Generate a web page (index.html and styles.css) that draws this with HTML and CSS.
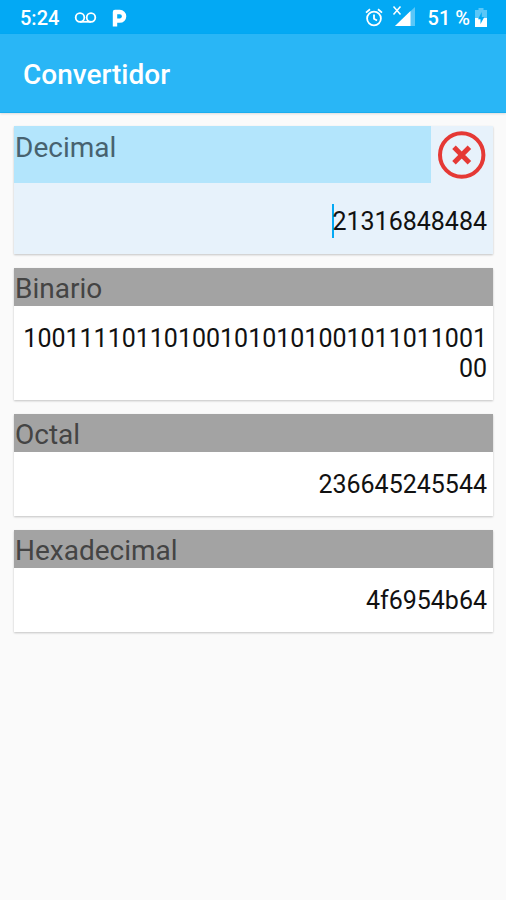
FILE: index.html
```html
<!DOCTYPE html>
<html lang="es">
  <head>
    <meta charset="UTF-8">
    <meta name="viewport" content="width=device-width, initial-scale=1">
    <title>Convertidor</title>
    <link rel="stylesheet" href="styles.css">
  </head>
  <body>
    <div class="status-bar">
      <span class="clock">5:24</span>
      <svg class="voicemail" width="23" height="12" viewBox="0 0 23 12">
        <circle cx="6" cy="5.500" r="4.300"/>
        <circle cx="17" cy="5.500" r="4.300"/>
        <path d="M6 9.800h11"/>
      </svg>
      <svg class="parking" width="15" height="18" viewBox="0 0 15 18">
        <path d="M3 17.500V3h4.800a4.300 4.300 0 0 1 0 8.600H4"/>
      </svg>
      <svg class="alarm" width="18" height="19" viewBox="0 0 18 19">
        <circle cx="9" cy="10.500" r="6.900"/>
        <path d="M9 6.500v4.200l3 1.800M1 4.600l4-3.300M17 4.600l-4-3.300"/>
      </svg>
      <svg class="signal" width="24" height="22" viewBox="0 0 24 22">
        <path class="faint" d="M3 21L23 2v19z"/>
        <path class="solid" d="M3 21L18.500 6V21z"/>
        <path class="cross" d="M1.500 1.500l7 8M8.500 1.500l-7 8"/>
      </svg>
      <span class="percent">51 %</span>
      <svg class="battery" width="12" height="19" viewBox="0 0 12 19">
        <path class="faint" d="M3.500 2V0h5v2H12v8H0V2z"/>
        <path class="solid" d="M0 10h12v9H0z"/>
        <path class="bolt" d="M6.800 4L3 11.300h2.500V16L9.300 9H6.800z"/>
      </svg>
    </div>
    <div class="toolbar">
      <h1>Convertidor</h1>
    </div>
    <div class="cards">
      <div class="card active">
        <div class="card-top">
          <div class="label">Decimal</div>
          <svg class="clear" width="62" height="57" viewBox="0 0 62 57">
            <circle cx="30.700" cy="29" r="21.700"/>
            <path d="M23 21.300l15.400 15.400M38.400 21.300L23 36.700"/>
          </svg>
        </div>
        <div class="value"><span class="caret"></span>21316848484</div>
      </div>
      <div class="card">
        <div class="label">Binario</div>
        <div class="value">10011110110100101010100101101100100</div>
      </div>
      <div class="card">
        <div class="label">Octal</div>
        <div class="value">236645245544</div>
      </div>
      <div class="card">
        <div class="label">Hexadecimal</div>
        <div class="value">4f6954b64</div>
      </div>
    </div>
  </body>
</html>
```
FILE: styles.css
```css
body {
  margin: 0;
  min-height: 100vh;
  background: #fafafa;
  font-family: Roboto, "Liberation Sans", sans-serif;
  color: #111;
}

.status-bar {
  display: flex;
  align-items: center;
  box-sizing: border-box;
  height: 34px;
  padding: 1px 19px 0 20px;
  background: #03a9f4;
  color: #fff;
  font-size: 20px;
  font-weight: 500;
}
.status-bar svg {
  fill: none;
  stroke: #fff;
  stroke-width: 1.8;
}
.status-bar .solid {
  fill: #fff;
  stroke: none;
}
.status-bar .faint {
  fill: rgba(255, 255, 255, 0.35);
  stroke: none;
}
.clock {
  width: 54px;
}
.status-bar .parking {
  margin-left: 15px;
  stroke-width: 4.4;
  stroke-linejoin: round;
}
.status-bar .alarm {
  margin-left: auto;
}
.signal {
  margin: -3px 12px 0 9px;
}
.status-bar .cross {
  stroke-width: 1.5;
}
.battery {
  margin-left: 5px;
}
.status-bar .bolt {
  fill: #03a9f4;
  stroke: none;
}

.toolbar {
  display: flex;
  align-items: center;
  box-sizing: border-box;
  height: 79px;
  padding: 2px 0 0 23px;
  background: #29b6f6;
  box-shadow: inset 0 -1px #1badee, 0 1px 2px rgba(0, 0, 0, 0.12);
}
.toolbar h1 {
  margin: 0;
  color: #fff;
  font-size: 28px;
  font-weight: 500;
}

.cards {
  display: flex;
  flex-direction: column;
  gap: 14px;
  padding: 13px 13px 0 14px;
}
.card {
  background: #fff;
  box-shadow: 0 1px 2px rgba(0, 0, 0, 0.22);
}
.card-top {
  display: flex;
}
.label {
  height: 38px;
  padding-left: 1px;
  background: #a3a3a3;
  color: #444;
  font-size: 28px;
  line-height: 41px;
}
.value {
  padding: 18px 6px 16px 8px;
  font-size: 25px;
  line-height: 30px;
  text-align: right;
  word-break: break-all;
}

.active {
  background: #e7f2fb;
}
.active .label {
  flex: 1;
  height: 57px;
  background: #b3e5fc;
  color: #47626f;
  line-height: 43px;
}
.active .value {
  padding: 24px 6px 17px;
}
.clear {
  fill: none;
  stroke: #e53935;
  stroke-width: 4;
}
.clear path {
  stroke-width: 5;
}
.caret {
  display: inline-block;
  width: 2px;
  height: 34px;
  margin: -10px -2px -6px 0;
  background: #03a9f4;
  vertical-align: -2px;
}
```
